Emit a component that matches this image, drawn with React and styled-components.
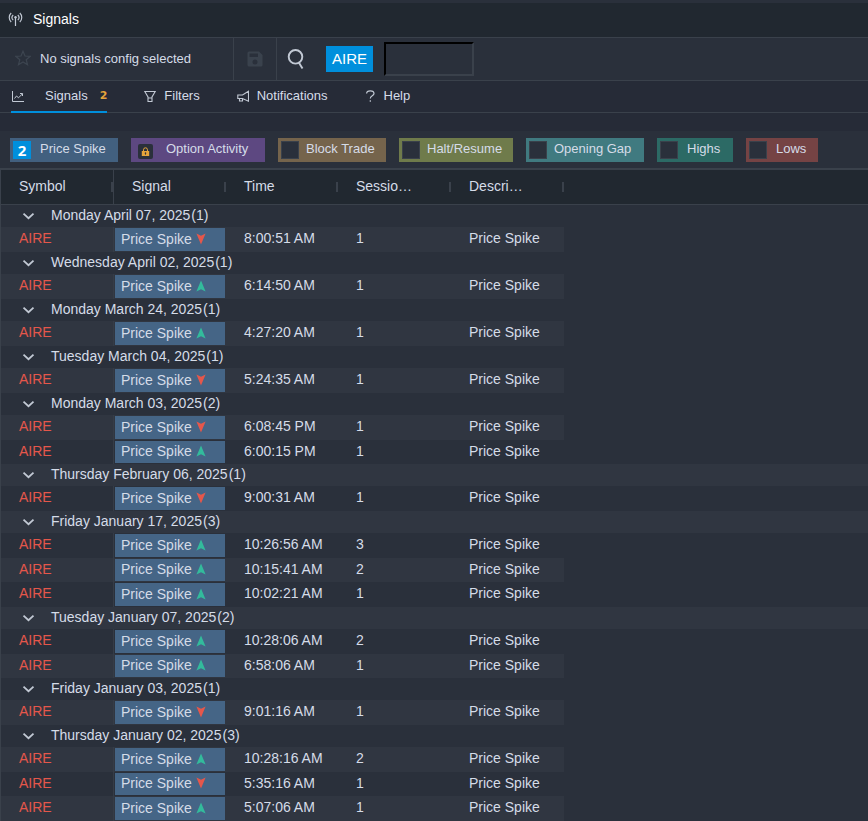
import React, { useState } from 'react';
import styled, { createGlobalStyle } from 'styled-components';

const colors = {
  panel: '#2a303b',
  dark: '#212830',
  tabs: '#262b37',
  stripe: '#303641',
  line: '#3a414b',
  text: '#d5dce8',
  accent: '#008fdc',
  orange: '#e5a43b',
  red: '#e5574b',
  green: '#33bb9c',
};

const GlobalStyle = createGlobalStyle`
  * {
    box-sizing: border-box;
  }

  body {
    margin: 0;
    background: ${colors.panel};
    color: ${colors.text};
    font-family: 'Liberation Sans', Arial, sans-serif;
    font-size: 13px;
    overflow: hidden;
  }

  button, input {
    font-family: inherit;
  }
`;

const Page = styled.div`
  display: flex;
  flex-direction: column;
  min-height: 100vh;
`;

const TitleBar = styled.header`
  display: flex;
  align-items: center;
  gap: 10px;
  height: 38px;
  padding: 0 8px 2px;
  background: ${colors.dark};
  border-top: 3px solid ${colors.panel};
  border-bottom: 1px solid ${colors.line};
`;

const Title = styled.h1`
  margin: 0;
  color: #fff;
  font-size: 14px;
  font-weight: 400;
`;

const Toolbar = styled.div`
  display: flex;
  align-items: stretch;
  height: 43px;
  border-bottom: 1px solid ${colors.line};
`;

const Config = styled.div`
  display: flex;
  align-items: center;
  gap: 9px;
  width: 234px;
  padding: 0 0 2px 15px;
  border-right: 1px solid ${colors.line};
`;

const IconButton = styled.button`
  display: flex;
  align-items: center;
  justify-content: center;
  padding: 0;
  border: 0;
  background: none;
  cursor: pointer;
`;

const SaveButton = styled(IconButton)`
  width: 43px;
  border-right: 1px solid ${colors.line};
`;

const Search = styled.div`
  display: flex;
  align-items: center;
  gap: 11px;
  padding: 0 10px;
`;

const SymbolTag = styled.button`
  height: 26px;
  margin-left: 10px;
  padding: 0 6px 1px;
  border: 0;
  background: ${colors.accent};
  color: #fff;
  font-size: 15px;
  cursor: pointer;
`;

const SymbolInput = styled.input`
  width: 90px;
  height: 34px;
  border: 2px solid;
  border-color: #000 ${colors.line} ${colors.line} #000;
  background: transparent;
  color: ${colors.text};
  outline: none;
`;

const Tabs = styled.nav`
  display: flex;
  gap: 37px;
  height: 32px;
  padding-left: 11px;
  background: ${colors.tabs};
  border-bottom: 1px solid ${colors.line};
`;

const Tab = styled.button`
  display: flex;
  align-items: center;
  gap: ${props => (props.$wide ? 21 : 8)}px;
  height: 32px;
  padding: 0;
  border: 0;
  border-bottom: 2px solid ${props => (props.$active ? colors.accent : 'transparent')};
  background: none;
  color: ${colors.text};
  font-size: 13px;
  cursor: pointer;
`;

const TabText = styled.span`
  display: flex;
  align-items: center;
  gap: 12px;
  padding-bottom: 2px;
`;

const Count = styled.b`
  color: ${colors.orange};
  font-family: 'DejaVu Sans', sans-serif;
  font-size: 11px;
`;

const Chips = styled.div`
  display: flex;
  flex-wrap: wrap;
  gap: 13px;
  padding: 7px 10px 6px;
  border-top: 18px solid ${colors.tabs};
  border-bottom: 2px solid ${colors.line};
`;

const Chip = styled.label`
  position: relative;
  display: flex;
  align-items: center;
  gap: ${props => props.$gap}px;
  width: ${props => props.$width}px;
  height: 24px;
  padding-left: 3px;
  background: ${props => props.$color};
  cursor: pointer;
`;

const ChipText = styled.span`
  padding-bottom: 4px;
  white-space: nowrap;
`;

const ChipBox = styled.input`
  appearance: none;
  width: 18px;
  height: 18px;
  margin: 0;
  border: 1px solid ${colors.line};
  background: ${colors.panel};
  cursor: pointer;

  &:checked {
    background: ${colors.accent};
  }
`;

const HiddenBox = styled.input`
  position: absolute;
  opacity: 0;
  pointer-events: none;
`;

const ChipCount = styled.b`
  width: 18px;
  height: 18px;
  background: ${colors.accent};
  color: #fff;
  font-family: 'Open Sans', sans-serif;
  font-size: 15px;
  line-height: 18px;
  text-align: center;
`;

const LockBox = styled.span`
  display: flex;
  align-items: center;
  justify-content: center;
  width: 15px;
  height: 15px;
  margin: 2px 0 0 4px;
  border-radius: 2px;
  background: ${colors.panel};
`;

const Table = styled.table`
  width: 100%;
  table-layout: fixed;
  border-collapse: separate;
  border-spacing: 0;
  border-left: 1px solid ${colors.line};
  font-size: 14px;
`;

const HeadCell = styled.th`
  height: 35px;
  padding: 0;
  background: ${colors.dark};
  border-bottom: 1px solid ${colors.line};
  font-weight: 400;
  text-align: left;

  &:first-child {
    border-right: 1px solid ${colors.line};
  }
`;

const HeadInner = styled.div`
  display: flex;
  align-items: center;
  justify-content: space-between;
  padding: 0 0 2px 18px;
`;

const Resizer = styled.span`
  width: 2px;
  height: 10px;
  margin-top: 2px;
  background: ${colors.line};
`;

const GroupCell = styled.th`
  height: 22px;
  padding: 0;
  background: ${props => (props.$stripe ? colors.stripe : colors.panel)};
  font-weight: 400;
  text-align: left;
`;

const GroupToggle = styled.button`
  display: flex;
  align-items: center;
  gap: 16px;
  height: 22px;
  padding: 0 0 0 21px;
  border: 0;
  background: none;
  color: ${colors.text};
  font-size: 14px;
  cursor: pointer;
`;

const GroupLabel = styled.span`
  display: flex;
  gap: 1px;
  padding-bottom: 2px;
`;

const Cell = styled.td`
  padding: 0 0 3px 18px;
  white-space: nowrap;
`;

const SymbolCell = styled(Cell)`
  border-right: 1px solid #353c47;
  color: ${colors.red};
`;

const SignalCell = styled.td`
  padding: 1px;
`;

const Signal = styled.div`
  display: flex;
  align-items: center;
  gap: 4px;
  height: 23px;
  padding: 0 0 2px 6px;
  background: #456586;
`;

const Row = styled.tr`
  background: ${props => (props.$stripe ? colors.stripe : colors.panel)};

  &:nth-child(odd) ${Signal} {
    height: 22px;
  }
`;

const EmptyCell = styled.td`
  padding: 0;
  background: ${colors.panel};
`;

const chips = [
  { name: 'Price Spike', color: '#42607f', width: 108, gap: 9, count: 2 },
  { name: 'Option Activity', color: '#5d4881', width: 134, gap: 13, locked: true },
  { name: 'Block Trade', color: '#75644c', width: 108, gap: 7 },
  { name: 'Halt/Resume', color: '#6f7b4b', width: 114, gap: 7 },
  { name: 'Opening Gap', color: '#407a80', width: 118, gap: 7 },
  { name: 'Highs', color: '#2c6a65', width: 76, gap: 9 },
  { name: 'Lows', color: '#754344', width: 72, gap: 9 },
];

const groups = [
  { day: 'Monday April 07, 2025', rows: [['8:00:51 AM', 1, 'down']] },
  { day: 'Wednesday April 02, 2025', rows: [['6:14:50 AM', 1, 'up']] },
  { day: 'Monday March 24, 2025', rows: [['4:27:20 AM', 1, 'up']] },
  { day: 'Tuesday March 04, 2025', rows: [['5:24:35 AM', 1, 'down']] },
  { day: 'Monday March 03, 2025', rows: [['6:08:45 PM', 1, 'down'], ['6:00:15 PM', 1, 'up']] },
  { day: 'Thursday February 06, 2025', rows: [['9:00:31 AM', 1, 'down']] },
  {
    day: 'Friday January 17, 2025',
    rows: [['10:26:56 AM', 3, 'up'], ['10:15:41 AM', 2, 'up'], ['10:02:21 AM', 1, 'up']],
  },
  { day: 'Tuesday January 07, 2025', rows: [['10:28:06 AM', 2, 'up'], ['6:58:06 AM', 1, 'up']] },
  { day: 'Friday January 03, 2025', rows: [['9:01:16 AM', 1, 'down']] },
  {
    day: 'Thursday January 02, 2025',
    rows: [['10:28:16 AM', 2, 'up'], ['5:35:16 AM', 1, 'down'], ['5:07:06 AM', 1, 'up']],
  },
];

const columns = ['Symbol', 'Signal', 'Time', 'Sessio…', 'Descri…'];

const AntennaIcon = () => (
  <svg width="15" height="15" viewBox="0 0 15 15" fill="none" stroke="#c2c9d4" strokeWidth="1.2">
    <path d="M3.2 1C.6 3.4.6 7.6 3.2 10M11.8 1c2.600 2.400 2.600 6.600 0 9M5.200 3c-1.500 1.500-1.500 3.700 0 5.200M9.800 3c1.500 1.500 1.500 3.700 0 5.200M7.500 6v8" />
    <circle cx="7.5" cy="5.3" r="1.2" fill="#c2c9d4" stroke="none" />
  </svg>
);

const StarIcon = () => (
  <svg width="16" height="16" viewBox="0 0 16 16" fill="none" stroke="#3d4550" strokeWidth="1.2">
    <path d="M8 1.2l2 4.8 5.2.3-4 3.4 1.3 5L8 11.9l-4.5 2.8 1.3-5-4-3.4L6 6z" />
  </svg>
);

const SaveIcon = () => (
  <svg width="16" height="16" viewBox="0 0 16 16" fill="#3a424d">
    <path
      fillRule="evenodd"
      d="M2 .5h10L15.5 4v10a1.5 1.5 0 0 1-1.5 1.500H2A1.500 1.500 0 0 1 .5 14V2A1.500 1.500 0 0 1 2 .5zM2.500 2.500v3.500h8.500V2.500zM8 8.500a2.500 2.500 0 1 0 0 5 2.500 2.500 0 0 0 0-5z"
    />
  </svg>
);

const SearchIcon = () => (
  <svg width="18" height="20" viewBox="0 0 18 20" fill="none" stroke="#c2c9d4" strokeWidth="1.9">
    <circle cx="8.5" cy="7.8" r="6.8" />
    <path d="M11.5 13l4 6.500" />
  </svg>
);

const ChartIcon = () => (
  <svg width="13" height="12" viewBox="0 0 13 12" fill="none" stroke="#c2c9d4">
    <path d="M1.5 1v10.500H13M3.500 8.500l2-2.500 2 1.800 4-4M9 3.500h2.500V6" />
  </svg>
);

const FilterIcon = () => (
  <svg width="12" height="12" viewBox="0 0 12 12" fill="none" stroke="#c2c9d4" strokeWidth="1.1">
    <path d="M.8 1.500h10.400L8 7v4.500H4V7zM4 8h4" />
  </svg>
);

const HornIcon = () => (
  <svg width="12" height="12" viewBox="0 0 12 12" fill="none" stroke="#c2c9d4" strokeWidth="1.1">
    <path d="M11.500 1.200v10L5.500 8.500H.8V5h4.700zM2.500 8.500v2.500h3V8.700" />
  </svg>
);

const HelpIcon = () => (
  <svg width="11" height="12" viewBox="0 0 11 12" fill="none" stroke="#c2c9d4" strokeWidth="1.2">
    <path d="M1.600 3.600C1.600 1.700 3.200.8 5.300.8s3.700 1 3.700 2.800C9 6 5.300 5.700 5.300 8.600M5.300 10.200v1.500" />
  </svg>
);

const LockIcon = () => (
  <svg width="9" height="9" viewBox="0 0 9 9" fill={colors.orange}>
    <path fillRule="evenodd" d="M.8 4H8.200v5H.8zM4.500 5.300a.8.8 0 0 0-.4 1.500v1h.8v-1a.8.8 0 0 0-.4-1.500z" />
    <path d="M2.500 4V2.800a2 2 0 0 1 4 0V4" fill="none" stroke={colors.orange} />
  </svg>
);

const ChevronIcon = () => (
  <svg width="13" height="8" viewBox="0 0 13 8" fill="none" stroke="#c2c9d4" strokeWidth="1.8">
    <path d="M1.500 1.700l5 4.500 5-4.500" />
  </svg>
);

const Arrow = ({ direction }) => (
  <svg width="10" height="12" viewBox="0 0 10 12">
    {direction === 'up' ? (
      <path d="M5 .5L9.600 11.500 5 9.200.4 11.500z" fill={colors.green} />
    ) : (
      <path d="M5 11.500L9.600.5 5 2.800.4.5z" fill={colors.red} />
    )}
  </svg>
);

const SignalChip = ({ chip }) => {
  const hasBadge = chip.count || chip.locked;
  const Box = hasBadge ? HiddenBox : ChipBox;

  return (
    <Chip $color={chip.color} $width={chip.width} $gap={chip.gap}>
      <Box type="checkbox" defaultChecked={Boolean(chip.count)} disabled={chip.locked} />
      {chip.count && <ChipCount>{chip.count}</ChipCount>}
      {chip.locked && <LockBox><LockIcon /></LockBox>}
      <ChipText>{chip.name}</ChipText>
    </Chip>
  );
};

const SignalGroup = ({ group, start }) => {
  const [open, setOpen] = useState(true);

  return (
    <tbody>
      <tr>
        <GroupCell colSpan={6} $stripe={start % 2 === 1}>
          <GroupToggle aria-expanded={open} onClick={() => setOpen(!open)}>
            <ChevronIcon />
            <GroupLabel>
              <span>{group.day}</span>
              <span>({group.rows.length})</span>
            </GroupLabel>
          </GroupToggle>
        </GroupCell>
      </tr>
      {open && group.rows.map(([time, session, direction], index) => (
        <Row key={time} $stripe={(start + index) % 2 === 0}>
          <SymbolCell>AIRE</SymbolCell>
          <SignalCell>
            <Signal>
              Price Spike
              <Arrow direction={direction} />
            </Signal>
          </SignalCell>
          <Cell>{time}</Cell>
          <Cell>{session}</Cell>
          <Cell>Price Spike</Cell>
          <EmptyCell />
        </Row>
      ))}
    </tbody>
  );
};

const App = () => {
  const [tab, setTab] = useState('signals');

  // Stripes run through group headings and rows alike
  let next = 0;
  const numbered = groups.map(group => {
    const start = next;
    next += group.rows.length + 1;
    return { group, start };
  });

  return (
    <Page>
      <GlobalStyle />
      <TitleBar>
        <AntennaIcon />
        <Title>Signals</Title>
      </TitleBar>

      <Toolbar>
        <Config>
          <IconButton aria-label="Favorite"><StarIcon /></IconButton>
          <span>No signals config selected</span>
        </Config>
        <SaveButton aria-label="Save"><SaveIcon /></SaveButton>
        <Search>
          <IconButton aria-label="Search"><SearchIcon /></IconButton>
          <SymbolTag>AIRE</SymbolTag>
          <SymbolInput aria-label="Symbol" />
        </Search>
      </Toolbar>

      <Tabs>
        <Tab $wide $active={tab === 'signals'} onClick={() => setTab('signals')}>
          <ChartIcon />
          <TabText>Signals <Count>2</Count></TabText>
        </Tab>
        <Tab $active={tab === 'filters'} onClick={() => setTab('filters')}>
          <FilterIcon />
          <TabText>Filters</TabText>
        </Tab>
        <Tab $active={tab === 'notifications'} onClick={() => setTab('notifications')}>
          <HornIcon />
          <TabText>Notifications</TabText>
        </Tab>
        <Tab $active={tab === 'help'} onClick={() => setTab('help')}>
          <HelpIcon />
          <TabText>Help</TabText>
        </Tab>
      </Tabs>

      <Chips>
        {chips.map(chip => <SignalChip key={chip.name} chip={chip} />)}
      </Chips>

      <Table>
        <colgroup>
          <col width="113" />
          <col width="112" />
          <col width="112" />
          <col width="113" />
          <col width="113" />
          <col />
        </colgroup>
        <thead>
          <tr>
            {columns.map(name => (
              <HeadCell key={name}>
                <HeadInner>
                  {name}
                  <Resizer />
                </HeadInner>
              </HeadCell>
            ))}
            <HeadCell />
          </tr>
        </thead>
        {numbered.map(({ group, start }) => (
          <SignalGroup key={group.day} group={group} start={start} />
        ))}
      </Table>
    </Page>
  );
};

export default App;
